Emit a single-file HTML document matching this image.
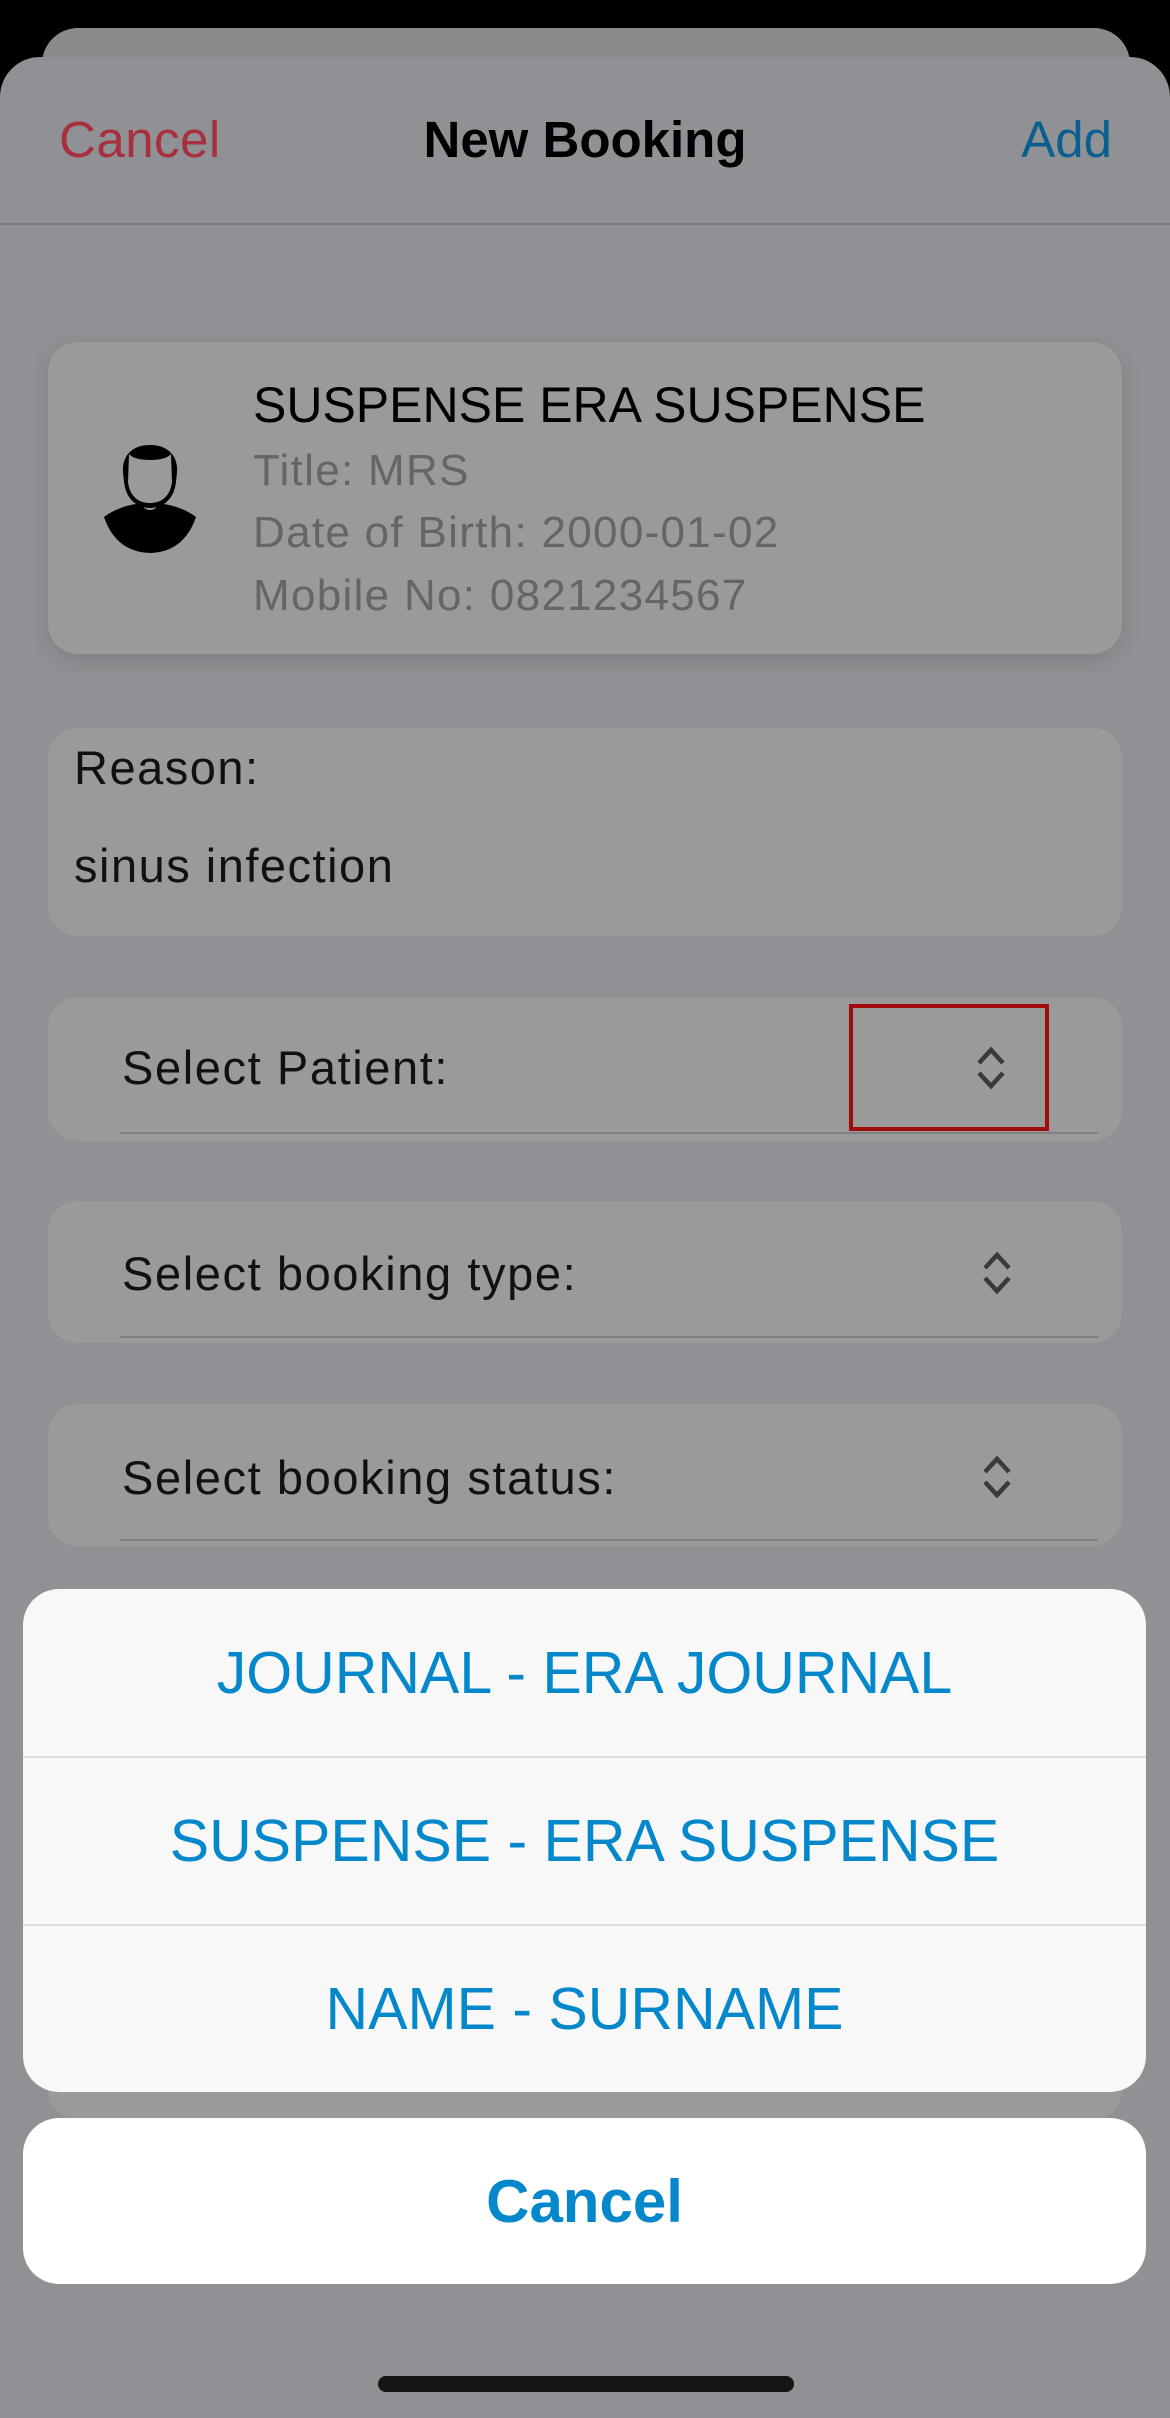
<!DOCTYPE html>
<html><head><meta charset="utf-8">
<style>
*{margin:0;padding:0;box-sizing:border-box}
body{width:1170px;height:2418px;background:#000;position:relative;overflow:hidden;font-family:"Liberation Sans",sans-serif}
.abs{position:absolute}
.sheet{left:0;top:57px;width:1170px;height:2361px;background:#909194;border-radius:40px 40px 0 0}
.back{left:42px;top:28px;width:1088px;height:80px;background:#8a8a8a;border-radius:36px 36px 0 0}
.t{position:absolute;white-space:nowrap;line-height:1}
.card{position:absolute;left:48px;width:1074px;background:#9a9a9a;border-radius:30px}
.line{position:absolute;left:120px;width:978px;height:2px;background:#808080}
.lbl{font-size:47px;letter-spacing:1.6px;color:#111;left:122px}
.sub{font-size:44px;letter-spacing:1.3px;color:#656565;left:253px}
.row{position:absolute;left:0;width:1123px;height:168px;display:flex;align-items:center;justify-content:center;font-size:59px;color:#0587cb}
</style></head><body>
<div class="abs back"></div>
<div class="abs sheet"></div>
<div class="t" style="left:59px;top:114px;font-size:51px;letter-spacing:0.5px;color:#a8303e">Cancel</div>
<div class="t" style="left:0;width:1170px;text-align:center;top:114px;font-size:51px;font-weight:bold;color:#000">New Booking</div>
<div class="t" style="right:58px;top:114px;font-size:51px;color:#0a5f8e">Add</div>
<div class="abs" style="left:0;top:223px;width:1170px;height:2px;background:#7c7c7e"></div>

<div class="card" style="top:342px;height:312px;box-shadow:0 6px 20px rgba(0,0,0,0.12)"></div>
<svg class="abs" style="left:100px;top:440px" width="100" height="115" viewBox="0 0 100 115">
<path d="M4 77 Q20 65 44 63 L44 68 Q50 72 56 68 L56 63 Q80 65 96 77 Q84 112 50 113 Q16 112 4 77Z" fill="#000"/>
<path d="M50 5 C30 5 22 18 23 32 L24 42 C26 60 38 68 50 68 C62 68 74 60 76 42 L77 32 C78 18 70 5 50 5Z" fill="#000"/>
<path d="M50 20 C40 20 32 18 29 14 L28 42 C30 58 40 63 50 63 C60 63 70 58 72 42 L71 14 C68 18 60 20 50 20Z" fill="#9a9a9a"/>
</svg>
<div class="t" style="left:253px;top:380px;font-size:50px;color:#000">SUSPENSE ERA SUSPENSE</div>
<div class="t sub" style="top:449px">Title: MRS</div>
<div class="t sub" style="top:511px">Date of Birth: 2000-01-02</div>
<div class="t sub" style="top:574px">Mobile No: 0821234567</div>

<div class="card" style="top:728px;height:208px"></div>
<div class="t" style="left:74px;top:744px;font-size:47px;letter-spacing:1.5px;color:#111">Reason:</div>
<div class="t" style="left:74px;top:842px;font-size:47px;letter-spacing:1.5px;color:#111">sinus infection</div>

<div class="card" style="top:997px;height:144px"></div>
<div class="line" style="top:1132px"></div>
<div class="t lbl" style="top:1044px">Select Patient:</div>
<div class="abs" style="left:849px;top:1004px;width:200px;height:127px;border:4px solid #a00c0c"></div>
<svg class="abs" style="left:973px;top:1045px" width="36" height="46" viewBox="0 0 36 46"><path d="M6 18 L18 5 L30 18 M6 28 L18 41 L30 28" fill="none" stroke="#3a3a3a" stroke-width="4.5"/></svg>

<div class="card" style="top:1201px;height:142px"></div>
<div class="line" style="top:1336px"></div>
<div class="t lbl" style="top:1250px">Select booking type:</div>
<svg class="abs" style="left:979px;top:1250px" width="36" height="46" viewBox="0 0 36 46"><path d="M6 18 L18 5 L30 18 M6 28 L18 41 L30 28" fill="none" stroke="#3a3a3a" stroke-width="4.5"/></svg>

<div class="card" style="top:1404px;height:142px"></div>
<div class="line" style="top:1539px"></div>
<div class="t lbl" style="top:1454px">Select booking status:</div>
<svg class="abs" style="left:979px;top:1454px" width="36" height="46" viewBox="0 0 36 46"><path d="M6 18 L18 5 L30 18 M6 28 L18 41 L30 28" fill="none" stroke="#3a3a3a" stroke-width="4.5"/></svg>

<div class="card" style="top:1600px;height:520px"></div>

<div class="abs" style="left:23px;top:1589px;width:1123px;height:503px;background:#f8f8f8;border-radius:36px;overflow:hidden">
 <div class="row" style="top:0">JOURNAL - ERA JOURNAL</div>
 <div class="abs" style="left:0;top:167px;width:1123px;height:2px;background:#dcdcdc"></div>
 <div class="row" style="top:168px">SUSPENSE - ERA SUSPENSE</div>
 <div class="abs" style="left:0;top:335px;width:1123px;height:2px;background:#dcdcdc"></div>
 <div class="row" style="top:336px">NAME - SURNAME</div>
</div>
<div class="abs" style="left:23px;top:2118px;width:1123px;height:166px;background:#fff;border-radius:36px;display:flex;align-items:center;justify-content:center;font-size:60px;font-weight:bold;color:#0587cb">Cancel</div>

<div class="abs" style="left:378px;top:2376px;width:416px;height:16px;border-radius:8px;background:#161616"></div>
</body></html>
